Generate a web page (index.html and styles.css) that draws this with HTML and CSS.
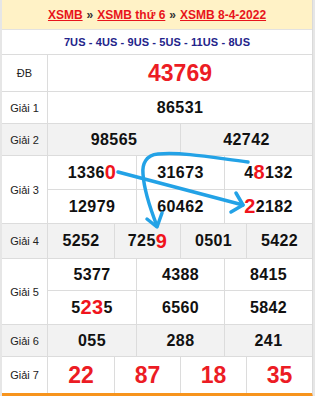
FILE: index.html
```html
<!DOCTYPE html>
<html lang="vi">
<head>
<meta charset="utf-8">
<title>XSMB 8-4-2022</title>
<link rel="stylesheet" href="styles.css">
</head>
<body>
<div class="page">
  <div class="board">
    <div class="head">
      <a class="crumb" href="#">XSMB</a> <span class="sep">»</span>
      <a class="crumb" href="#">XSMB thứ 6</a> <span class="sep">»</span>
      <a class="crumb" href="#">XSMB 8-4-2022</a>
    </div>
    <div class="codes">7US - 4US - 9US - 5US - 11US - 8US</div>

    <div class="row r-db">
      <div class="lbl">ĐB</div>
      <div class="vals"><div class="line n1"><div class="cell big red">43769</div></div></div>
    </div>

    <div class="row r-32">
      <div class="lbl">Giải 1</div>
      <div class="vals"><div class="line n1"><div class="cell">86531</div></div></div>
    </div>

    <div class="row r-32 gray">
      <div class="lbl">Giải 2</div>
      <div class="vals"><div class="line n2"><div class="cell">98565</div><div class="cell">42742</div></div></div>
    </div>

    <div class="row">
      <div class="lbl">Giải 3</div>
      <div class="vals">
        <div class="line n3 sub-a3"><div class="cell">1336<span class="hit">0</span></div><div class="cell">31673</div><div class="cell">4<span class="hit">8</span>132</div></div>
        <div class="line n3 sub-b3"><div class="cell">12979</div><div class="cell">60462</div><div class="cell"><span class="hit">2</span>2182</div></div>
      </div>
    </div>

    <div class="row r-35 gray">
      <div class="lbl">Giải 4</div>
      <div class="vals"><div class="line n4"><div class="cell">5252</div><div class="cell">725<span class="hit">9</span></div><div class="cell">0501</div><div class="cell">5422</div></div></div>
    </div>

    <div class="row">
      <div class="lbl">Giải 5</div>
      <div class="vals">
        <div class="line n3 sub-a5"><div class="cell">5377</div><div class="cell">4388</div><div class="cell">8415</div></div>
        <div class="line n3 sub-b5"><div class="cell">5<span class="hit">23</span>5</div><div class="cell">6560</div><div class="cell">5842</div></div>
      </div>
    </div>

    <div class="row r-32 gray">
      <div class="lbl">Giải 6</div>
      <div class="vals"><div class="line n3"><div class="cell">055</div><div class="cell">288</div><div class="cell">241</div></div></div>
    </div>

    <div class="row r-last">
      <div class="lbl">Giải 7</div>
      <div class="vals"><div class="line n4"><div class="cell big red">22</div><div class="cell big red">87</div><div class="cell big red">18</div><div class="cell big red">35</div></div></div>
    </div>
  </div>

  <svg class="arrows" width="315" height="396" viewBox="0 0 315 396" aria-hidden="true">
    <g fill="none" stroke="#23a2e6" stroke-width="3.5" stroke-linecap="round" stroke-linejoin="round">
      <path d="M118,172 L243,205"/>
      <path d="M236,193 L243,205 L231,212"/>
      <path d="M248,162 C215,158 185,152 158,154 C146,155 142,164 143,174 C144,190 150,208 157,226"/>
      <path d="M147,219 L157,227 L162,213"/>
    </g>
  </svg>
</div>
</body>
</html>
```

FILE: styles.css
```css
* { box-sizing: border-box; }

html, body {
  margin: 0;
  padding: 0;
}

body {
  background: #e6e6e6;
  font-family: "Liberation Sans", Arial, sans-serif;
  color: #111;
}

.page {
  position: relative;
  width: 315px;
  height: 396px;
  overflow: hidden;
}

.board {
  margin-left: 2px;
  width: 311px;
  background: #fff;
  border-right: 1px solid #dadada;
  border-bottom: 4px solid #f7941d;
}

.head {
  height: 30px;
  background: #fff2c6;
  border-bottom: 1px solid #e2e2e2;
  display: flex;
  align-items: center;
  justify-content: center;
  font-size: 12px;
  font-weight: bold;
  white-space: nowrap;
}

.crumb {
  color: #e8141b;
  text-decoration: underline;
}

.sep {
  color: #333;
  margin: 0 4px;
}

.codes {
  height: 25px;
  border-bottom: 1px solid #dcdcdc;
  display: flex;
  align-items: center;
  justify-content: center;
  font-size: 11px;
  font-weight: bold;
  color: #23238a;
  letter-spacing: 0.1px;
}

.row {
  display: flex;
  border-bottom: 1px solid #dcdcdc;
}

.row.gray { background: #f2f2f2; }

.r-db { height: 37px; }
.r-32 { height: 32px; }
.r-35 { height: 35px; }
.r-last { height: 36px; border-bottom: none; }

.lbl {
  width: 46px;
  flex: none;
  border-right: 1px solid #dcdcdc;
  display: flex;
  align-items: center;
  justify-content: center;
  font-size: 11px;
  color: #222;
}

.vals {
  flex: 1;
  display: flex;
  flex-direction: column;
}

.line {
  flex: 1;
  display: grid;
}

.n1 { grid-template-columns: 1fr; }
.n2 { grid-template-columns: repeat(2, 1fr); }
.n3 { grid-template-columns: repeat(3, 1fr); }
.n4 { grid-template-columns: repeat(4, 1fr); }

.sub-a3 { height: 34px; flex: none; border-bottom: 1px solid #dcdcdc; }
.sub-b3 { height: 33px; flex: none; }
.sub-a5 { height: 32px; flex: none; border-bottom: 1px solid #dcdcdc; }
.sub-b5 { height: 33px; flex: none; }

.cell {
  display: flex;
  align-items: center;
  justify-content: center;
  font-size: 16px;
  font-weight: bold;
  letter-spacing: 0.4px;
  color: #111;
  white-space: nowrap;
}

.cell + .cell { border-left: 1px solid #dcdcdc; }

.cell.big { font-size: 23px; letter-spacing: 0; }
.red { color: #ec1c24; }

.hit {
  color: #f0141c;
  font-size: 20px;
}

.arrows {
  position: absolute;
  left: 0;
  top: 0;
  pointer-events: none;
}
```
